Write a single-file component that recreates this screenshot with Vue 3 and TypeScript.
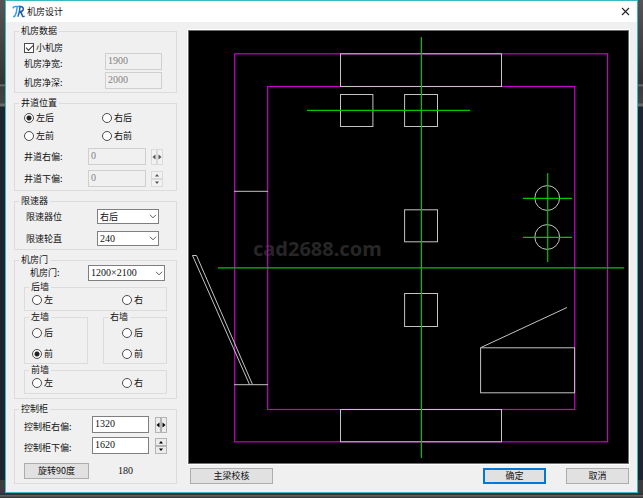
<script setup lang="ts">
import { ref } from 'vue'

interface Choice {
  value: string
  label: string
}
interface Wall {
  key: string
  title: string
  stacked: boolean
  choices: Choice[]
}

const smallRoom = ref(true)
const roomWidth = ref('1900')
const roomDepth = ref('2000')

const shaftChoices: Choice[] = [
  { value: 'lb', label: '左后' },
  { value: 'rb', label: '右后' },
  { value: 'lf', label: '左前' },
  { value: 'rf', label: '右前' },
]
const shaftPosition = ref('lb')
const shaftRight = ref('0')
const shaftDown = ref('0')

const governorSide = ref('右后')
const governorWheel = ref('240')
const doorSize = ref('1200×2100')

const walls: Wall[] = [
  { key: 'back', title: '后墙', stacked: false, choices: [{ value: 'back-l', label: '左' }, { value: 'back-r', label: '右' }] },
  { key: 'left', title: '左墙', stacked: true, choices: [{ value: 'left-b', label: '后' }, { value: 'left-f', label: '前' }] },
  { key: 'right', title: '右墙', stacked: true, choices: [{ value: 'right-b', label: '后' }, { value: 'right-f', label: '前' }] },
  { key: 'front', title: '前墙', stacked: false, choices: [{ value: 'front-l', label: '左' }, { value: 'front-r', label: '右' }] },
]
const doorPlace = ref('left-f')

const cabinetRight = ref('1320')
const cabinetDown = ref('1620')
const cabinetAngle = ref(180)

function rotate(): void {
  cabinetAngle.value = (cabinetAngle.value + 90) % 360
}
function step(value: string, delta: number): string {
  return String(Number(value) + delta)
}
</script>

<template>
  <div class="desktop">
    <main class="dialog">
      <header class="titlebar">
        <svg class="logo" viewBox="0 0 13 13" aria-hidden="true">
          <path d="M0.8 3.4 Q1.6 1.4 3.6 1.6 H8.6" fill="none" stroke="#35a4ea" stroke-width="1.5" />
          <path d="M5.2 2 Q4.8 8 2.6 11.6 H1" fill="none" stroke="#35a4ea" stroke-width="1.5" />
          <path d="M8 2 Q7.6 8 5.8 11.8" fill="none" stroke="#2368b8" stroke-width="1.5" />
          <path d="M7.4 1.6 C12.6 0.8 12.6 6.4 7.6 6.8 Q9.8 7.4 10.2 10.4 Q10.8 12.2 12.6 11.2" fill="none" stroke="#1f58a8" stroke-width="1.5" />
        </svg>
        <h1>机房设计</h1>
        <button type="button" class="close" aria-label="关闭">
          <svg viewBox="0 0 9 9"><path d="M1 1 L8 8 M8 1 L1 8" fill="none" stroke="#222" stroke-width="1.1" /></svg>
        </button>
      </header>

      <div class="content">
        <form class="settings" @submit.prevent>
          <fieldset>
            <legend>机房数据</legend>
            <div class="rows room">
              <label class="choice"><input v-model="smallRoom" type="checkbox" />小机房</label>
              <div class="row">
                <label for="room-width" class="low">机房净宽:</label>
                <input id="room-width" v-model="roomWidth" type="text" disabled />
              </div>
              <div class="row second">
                <label for="room-depth" class="low">机房净深:</label>
                <input id="room-depth" v-model="roomDepth" type="text" disabled />
              </div>
            </div>
          </fieldset>

          <fieldset>
            <legend>井道位置</legend>
            <div class="rows shaft">
              <div class="corners">
                <label v-for="c in shaftChoices" :key="c.value" class="choice">
                  <input v-model="shaftPosition" type="radio" name="shaft" :value="c.value" />{{ c.label }}
                </label>
              </div>
              <div class="row">
                <label for="shaft-right">井道右偏:</label>
                <input id="shaft-right" v-model="shaftRight" type="text" disabled />
                <span class="spin across">
                  <button type="button" disabled aria-label="左"><svg viewBox="0 0 4 6"><path d="M3.5 0.5 L0.5 3 L3.5 5.5Z" /></svg></button>
                  <button type="button" disabled aria-label="右"><svg viewBox="0 0 4 6"><path d="M0.5 0.5 L3.5 3 L0.5 5.5Z" /></svg></button>
                </span>
              </div>
              <div class="row">
                <label for="shaft-down">井道下偏:</label>
                <input id="shaft-down" v-model="shaftDown" type="text" disabled />
                <span class="spin upright">
                  <button type="button" disabled aria-label="上"><svg viewBox="0 0 6 4"><path d="M1 3.5 L3 1 L5 3.5Z" /></svg></button>
                  <button type="button" disabled aria-label="下"><svg viewBox="0 0 6 4"><path d="M1 0.5 L3 3 L5 0.5Z" /></svg></button>
                </span>
              </div>
            </div>
          </fieldset>

          <fieldset>
            <legend>限速器</legend>
            <div class="rows governor">
              <div class="row">
                <label for="gov-side">限速器位</label>
                <span class="pick">
                  <select id="gov-side" v-model="governorSide" class="worded">
                    <option>右后</option>
                    <option>左后</option>
                  </select>
                  <svg viewBox="0 0 8 5"><path d="M1 0.8 L4 3.8 L7 0.8" /></svg>
                </span>
              </div>
              <div class="row">
                <label for="gov-wheel">限速轮直</label>
                <span class="pick">
                  <select id="gov-wheel" v-model="governorWheel">
                    <option>240</option>
                    <option>300</option>
                  </select>
                  <svg viewBox="0 0 8 5"><path d="M1 0.8 L4 3.8 L7 0.8" /></svg>
                </span>
              </div>
            </div>
          </fieldset>

          <fieldset>
            <legend>机房门</legend>
            <div class="rows door">
              <div class="row">
                <label for="door-size">机房门:</label>
                <span class="pick">
                  <select id="door-size" v-model="doorSize">
                    <option>1200×2100</option>
                    <option>1000×2000</option>
                  </select>
                  <svg viewBox="0 0 8 5"><path d="M1 0.8 L4 3.8 L7 0.8" /></svg>
                </span>
              </div>
              <div class="walls">
                <fieldset v-for="w in walls" :key="w.key" :class="w.stacked ? 'stacked' : 'wide'">
                  <legend>{{ w.title }}</legend>
                  <div class="sides">
                    <label v-for="c in w.choices" :key="c.value" class="choice">
                      <input v-model="doorPlace" type="radio" name="door" :value="c.value" />{{ c.label }}
                    </label>
                  </div>
                </fieldset>
              </div>
            </div>
          </fieldset>

          <fieldset>
            <legend>控制柜</legend>
            <div class="rows cabinet">
              <div class="row">
                <label for="cab-right" class="low">控制柜右偏:</label>
                <input id="cab-right" v-model="cabinetRight" type="text" />
                <span class="spin across">
                  <button type="button" aria-label="左" @click="cabinetRight = step(cabinetRight, -10)"><svg viewBox="0 0 4 6"><path d="M3.5 0.5 L0.5 3 L3.5 5.5Z" /></svg></button>
                  <button type="button" aria-label="右" @click="cabinetRight = step(cabinetRight, 10)"><svg viewBox="0 0 4 6"><path d="M0.5 0.5 L3.5 3 L0.5 5.5Z" /></svg></button>
                </span>
              </div>
              <div class="row">
                <label for="cab-down" class="low">控制柜下偏:</label>
                <input id="cab-down" v-model="cabinetDown" type="text" />
                <span class="spin upright">
                  <button type="button" aria-label="上" @click="cabinetDown = step(cabinetDown, 10)"><svg viewBox="0 0 6 4"><path d="M1 3.5 L3 1 L5 3.5Z" /></svg></button>
                  <button type="button" aria-label="下" @click="cabinetDown = step(cabinetDown, -10)"><svg viewBox="0 0 6 4"><path d="M1 0.5 L3 3 L5 0.5Z" /></svg></button>
                </span>
              </div>
              <div class="turn">
                <button type="button" class="push" @click="rotate">旋转90度</button>
                <output>{{ cabinetAngle }}</output>
              </div>
            </div>
          </fieldset>
        </form>

        <section class="preview">
          <div class="canvas">
            <svg viewBox="189 31 439 432" role="img" aria-label="机房平面图">
              <text x="253" y="256" class="watermark">cad2688.com</text>
              <g class="wall">
                <rect x="234.7" y="53.8" width="372.9" height="388" />
                <rect x="267.7" y="86.5" width="307" height="323" />
              </g>
              <g class="part">
                <rect x="340.5" y="53.8" width="161" height="32.7" />
                <rect x="340.5" y="409.5" width="161" height="32.3" />
                <rect x="340.5" y="94.5" width="32.4" height="32" />
                <rect x="404.6" y="94.5" width="32.9" height="32" />
                <rect x="404.6" y="209.8" width="32.9" height="32" />
                <rect x="404.6" y="293.5" width="32.9" height="33" />
                <rect x="480.6" y="347.8" width="94" height="45" />
                <path d="M234 191.3 H268 M234 384.7 H268" />
                <path d="M249.5 384.5 L192.5 255.5 H196.5 L252.5 384.5" />
                <path d="M481 347.5 L567 307.5" />
                <circle cx="547.2" cy="198" r="12.4" />
                <circle cx="547.2" cy="237" r="12.4" />
              </g>
              <path
                class="axis"
                d="M421.4 37 V458 M218 267.8 H624 M307 110.4 H470 M547.7 173 V262 M523 198.4 H572 M523 237.3 H572"
              />
            </svg>
          </div>
          <footer class="actions">
            <button type="button" class="push check">主梁校核</button>
            <button type="button" class="push primary">确定</button>
            <button type="button" class="push">取消</button>
          </footer>
        </section>
      </div>
    </main>
  </div>
</template>

<style>
body {
  margin: 0;
}
</style>

<style scoped>
* {
  box-sizing: border-box;
}
.desktop {
  display: grid;
  min-height: 100vh;
  padding: 0 5px 5px;
  font: 9px/10px "Noto Sans CJK SC", sans-serif;
  color: #111;
  background:
    linear-gradient(#343434 2px, #666 2px, #4a4a4a 4px, #3a3a3a 4px) bottom / 100% 5px no-repeat,
    linear-gradient(#3c3c3c, #3c3c3c) bottom / 100% 18px no-repeat,
    linear-gradient(#555 0, #333 84px, #777 85px, #3c3c3c 87px, #444 103px, #6a6a6a 104px, #6a6a6a 106px, #1d2530 107px);
}
.dialog {
  display: flex;
  flex-direction: column;
  min-width: 0;
  background: #f0f0f0;
  border: 1px solid #3cb8c0;
}
.titlebar {
  display: flex;
  align-items: center;
  height: 21px;
  padding: 0 7px 0 6px;
  gap: 2px;
  background: #fff;
}
.logo {
  width: 13px;
  height: 13px;
}
h1 {
  flex: 1;
  margin: 0;
  font-size: 9px;
  font-weight: 400;
}
.close {
  display: grid;
  padding: 0;
  border: 0;
  background: none;
}
.close svg {
  width: 9px;
  height: 9px;
}
.content {
  display: flex;
  flex: 1;
  gap: 11px;
  padding: 4px 8px 8px;
}
.settings {
  display: flex;
  flex-direction: column;
  flex: 0 0 163px;
  gap: 5px;
}
fieldset {
  min-width: 0;
  margin: 0;
  padding: 0;
  border: 1px solid #dcdcdc;
}
legend {
  height: 10px;
  margin-left: 4px;
  padding: 0 2px;
}
.rows {
  display: grid;
  padding: 0 9px;
}
.row {
  display: grid;
  align-items: center;
}
.low {
  padding-top: 4px;
}
.choice {
  display: flex;
  align-items: center;
  gap: 2px;
  height: 10px;
}
input[type='text'] {
  width: 100%;
  height: 17px;
  padding: 0 2px 2px;
  border: 1px solid #7f7f7f;
  border-radius: 0;
  background: #fff;
  font: 10px/12px "Liberation Serif", serif;
  color: #111;
}
input[type='text']:disabled {
  border-color: #cfcfcf;
  background: #f0f0f0;
  color: #808080;
}
input[type='radio'],
input[type='checkbox'] {
  appearance: none;
  display: grid;
  place-items: center;
  width: 10px;
  height: 10px;
  margin: 0;
  border: 1px solid #4c4c4c;
  background: #fff;
}
input[type='radio'] {
  border-radius: 50%;
}
input[type='radio']:checked {
  background: radial-gradient(circle, #222 2px, #fff 3px);
}
input[type='checkbox']:checked::before {
  content: '';
  width: 6px;
  height: 3px;
  margin-bottom: 2px;
  border: solid #333;
  border-width: 0 0 1px 1px;
  transform: rotate(-45deg);
}
.room {
  padding-top: 7px;
  padding-bottom: 3px;
}
.room .row {
  grid-template-columns: 81px 57px;
}
.second {
  margin-top: 2px;
}
.shaft {
  gap: 5px;
  padding-top: 5px;
  padding-bottom: 3px;
}
.corners {
  display: grid;
  grid-template-columns: 78px 1fr;
  row-gap: 8px;
  padding-bottom: 2px;
}
.shaft .row {
  grid-template-columns: 64px 58px 17px;
}
.shaft .spin {
  margin-left: 5px;
}
.governor {
  gap: 7px;
  padding: 3px 11px;
}
.governor .row {
  grid-template-columns: 71px 62px;
}
.pick {
  display: grid;
  align-items: center;
}
.pick > * {
  grid-area: 1 / 1;
}
.pick svg {
  justify-self: end;
  width: 8px;
  height: 5px;
  margin-right: 2px;
  fill: none;
  stroke: #555;
  pointer-events: none;
}
select {
  appearance: none;
  width: 100%;
  height: 15px;
  padding: 0 12px 0 2px;
  border: 1px solid #7f7f7f;
  border-radius: 0;
  background: #fff;
  font: 10px/12px "Liberation Serif", serif;
  color: #111;
}
.worded {
  font: 9px/12px "Noto Sans CJK SC", sans-serif;
}
.door {
  gap: 1px;
  padding-bottom: 4px;
}
.door > .row {
  grid-template-columns: 58px 77px;
  padding-left: 6px;
}
.door select {
  height: 16px;
}
.walls {
  display: grid;
  grid-template-columns: 64px 64px;
  justify-content: space-between;
  row-gap: 1px;
}
.wide {
  grid-column: 1 / -1;
}
.sides {
  display: grid;
  padding: 3px 7px 5px;
}
.wide .sides {
  grid-template-columns: 90px 1fr;
}
.stacked .sides {
  gap: 11px;
  padding: 6px 7px 4px;
}
.stacked + .stacked .sides {
  padding-left: 18px;
}
.cabinet {
  gap: 4px;
  padding-top: 2px;
  padding-bottom: 4px;
}
.cabinet .row {
  grid-template-columns: 68px 57px 18px;
}
.cabinet .spin {
  margin-left: 6px;
}
.spin {
  display: grid;
  width: 12px;
  height: 16px;
}
.across {
  grid-template-columns: 1fr 1fr;
}
.upright {
  grid-template-rows: 1fr 1fr;
}
.spin button {
  display: grid;
  place-items: center;
  min-width: 0;
  min-height: 0;
  padding: 0;
  border: 1px solid #b4b4b4;
  background: #ececec;
  fill: #000;
}
.spin button:disabled {
  border-color: #dadada;
  background: #f2f2f2;
  fill: #555;
}
.across svg {
  width: 4px;
  height: 6px;
}
.upright svg {
  width: 6px;
  height: 4px;
}
.turn {
  display: flex;
  align-items: center;
  gap: 29px;
  padding-top: 5px;
}
.turn output {
  font: 10px/12px "Liberation Serif", serif;
}
.push {
  width: 65px;
  height: 16px;
  padding: 0;
  border: 1px solid #adadad;
  background: #e1e1e1;
  font: inherit;
  color: #111;
}
.preview {
  display: flex;
  flex: 1;
  flex-direction: column;
  gap: 4px;
  min-width: 0;
  padding-top: 4px;
}
.canvas {
  display: grid;
  flex: 1 1 0;
  min-height: 0;
  border: 1px solid #6e6e6e;
  outline: 1px solid #fff;
  background: #000;
}
.canvas svg {
  width: 100%;
  height: 100%;
  min-height: 0;
}
.wall {
  fill: none;
  stroke: #c800c8;
  stroke-width: 1.2;
}
.part {
  fill: none;
  stroke: #c4c4c4;
}
.axis {
  fill: none;
  stroke: #00c400;
  stroke-width: 1.2;
}
.watermark {
  font: bold 20px "Noto Sans", sans-serif;
  fill: #262626;
}
.actions {
  display: flex;
  gap: 20px;
  padding-left: 2px;
}
.actions .push {
  width: 63px;
}
.actions .check {
  width: 83px;
  margin-right: auto;
}
.actions .primary {
  border: 2px solid #0078d7;
}
</style>
